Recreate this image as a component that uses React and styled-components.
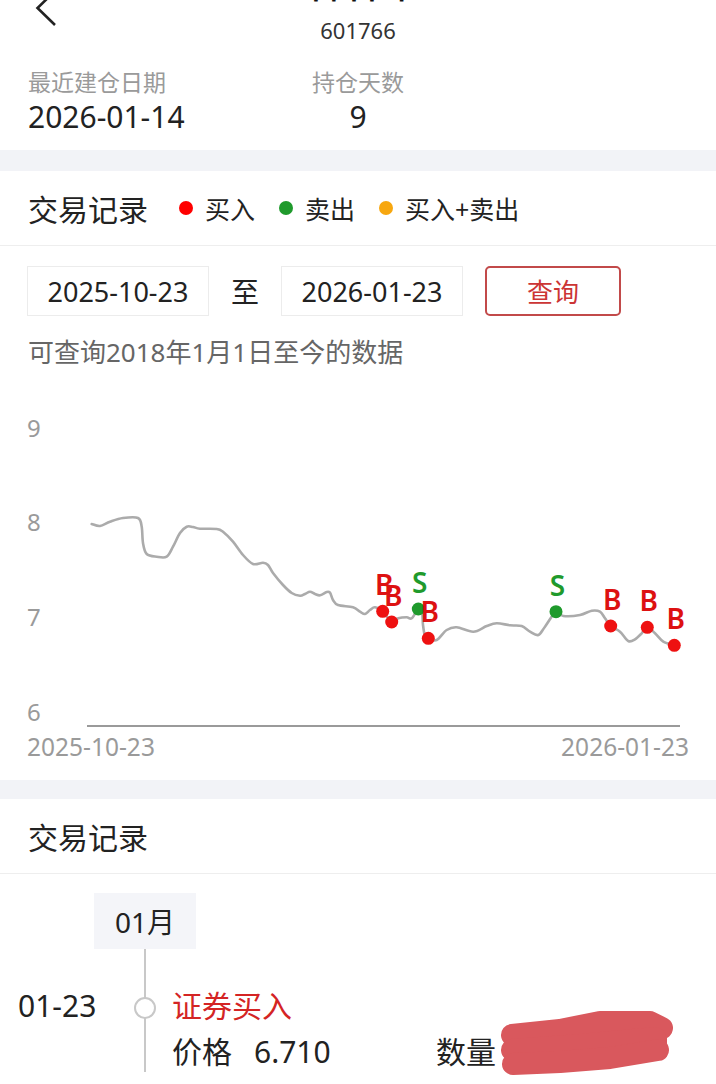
import React from "react";
import styled, { createGlobalStyle } from "styled-components";

const GlobalStyle = createGlobalStyle`
  html, body { margin: 0; padding: 0; background: #ffffff; }
  body {
    font-family: "Noto Sans", "Noto Sans CJK SC", sans-serif;
    color: #222;
    overflow: hidden;
  }
  * { box-sizing: border-box; }
`;

const Page = styled.div`
  width: 716px;
  background: #fff;
`;

const NavBar = styled.header`
  margin-top: -32px;
  display: grid;
  grid-template-columns: 72px 1fr 72px;
`;

const BackButton = styled.div`
  padding: 15px 0 0 30px;
  svg { display: block; }
`;

const NavCenter = styled.div`
  text-align: center;
`;

const StockName = styled.div`
  font-size: 28px;
  line-height: 40px;
  font-weight: 700;
  color: #111;
`;

const StockCode = styled.div`
  margin-top: 2px;
  font-size: 22px;
  line-height: 40px;
  color: #333;
`;

const InfoGrid = styled.section`
  display: grid;
  grid-template-columns: 284px auto;
  justify-content: start;
  padding: 16px 0 14px 28px;
`;

const InfoCol = styled.div`
  display: flex;
  flex-direction: column;
  align-items: ${(p) => (p.$center ? "center" : "flex-start")};
`;

const InfoLabel = styled.div`
  font-size: 23px;
  line-height: 32px;
  color: #9a9a9a;
`;

const InfoValue = styled.div`
  font-size: 30px;
  line-height: 38px;
  color: #222;
`;

const Band = styled.div`
  height: ${(p) => p.$h}px;
  background: #f2f3f7;
`;

const SectionHeader = styled.div`
  height: 75px;
  display: flex;
  align-items: center;
  padding-left: 28px;
  border-bottom: 1px solid #eeeeee;
`;

const SectionTitle = styled.h2`
  margin: 0;
  font-size: 30px;
  font-weight: 400;
  color: #222;
`;

const Legend = styled.div`
  display: flex;
  align-items: center;
  gap: 24px;
  margin-left: 31px;
`;

const LegendItem = styled.div`
  display: flex;
  align-items: center;
  gap: 12px;
  font-size: 25px;
  color: #222;
`;

const Dot = styled.span`
  width: 14px;
  height: 14px;
  border-radius: 50%;
  background: ${(p) => p.$color};
`;

const DateRow = styled.div`
  display: flex;
  align-items: center;
  gap: 22px;
  padding: 20px 0 0 27px;
`;

const DateBox = styled.div`
  width: 182px;
  height: 50px;
  border: 1.5px solid #ececec;
  display: flex;
  align-items: center;
  justify-content: center;
  font-size: 27px;
  color: #222;
`;

const RangeSep = styled.span`
  font-size: 28px;
  color: #222;
`;

const QueryButton = styled.button`
  width: 136px;
  height: 50px;
  border: 2px solid #c24a4a;
  border-radius: 5px;
  background: #fff;
  color: #cc3535;
  font-family: inherit;
  font-size: 26px;
  padding: 0;
`;

const Hint = styled.p`
  margin: 18px 0 0 28px;
  font-size: 26px;
  line-height: 36px;
  color: #666;
`;

const ChartSvg = styled.svg`
  display: block;
  width: 716px;
  height: 410px;
`;

const MonthRow = styled.div`
  padding: 19px 0 0 94px;
`;

const MonthTag = styled.div`
  width: 102px;
  height: 56px;
  background: #f4f5f9;
  display: flex;
  align-items: center;
  justify-content: center;
  font-size: 28px;
  color: #222;
`;

const ItemRow = styled.div`
  display: grid;
  grid-template-columns: 124px 42px 1fr;
  padding-bottom: 40px;
`;

const DateCell = styled.div`
  padding: 37px 0 0 18px;
  font-size: 30px;
  line-height: 40px;
  color: #222;
`;

const Rail = styled.div`
  display: flex;
  justify-content: center;
  background: linear-gradient(#c8c8c8, #c8c8c8) no-repeat center / 2px 100%;
`;

const RailNode = styled.span`
  margin-top: 48px;
  width: 22px;
  height: 22px;
  border-radius: 50%;
  border: 2px solid #c8c8c8;
  background: #fff;
`;

const Content = styled.div`
  padding: 37px 0 0 6px;
`;

const TradeType = styled.div`
  font-size: 30px;
  line-height: 40px;
  color: ${(p) => p.$color};
`;

const DetailGrid = styled.div`
  margin-top: 6px;
  display: grid;
  grid-template-columns: 264px 1fr;
`;

const DetailCell = styled.div`
  position: relative;
  display: flex;
  gap: 22px;
  font-size: 30px;
  line-height: 40px;
  color: #222;
`;

const Redaction = styled.svg`
  position: absolute;
  left: 60px;
  top: -24px;
  width: 184px;
  height: 72px;
`;

const points = [
  [91.7, 524], [100, 526], [110, 521.7], [123, 518], [138, 518], [141.7, 526.7], [143, 543],
  [146.7, 554], [156.7, 556.7], [166.7, 556.7], [173, 546.7], [180, 533], [186.7, 526.7],
  [193, 527], [200, 528.7], [216.7, 529], [223, 531.7], [233, 541.7], [243, 555], [253, 564],
  [263, 562.7], [268, 565], [273, 573], [283, 585], [291.7, 593], [300, 595.7], [305, 594],
  [310, 591.7], [315, 594], [320, 595.3], [326.7, 592], [330, 592.7], [333, 600], [338, 605],
  [353, 607.3], [360, 611.7], [365, 614], [370, 610], [375, 607.3], [382.7, 611.3],
  [391.7, 622], [398.3, 618.3], [406.7, 617.3], [411.7, 618.3], [418.3, 609], [422, 612],
  [423, 625], [425, 636], [428.3, 638.3], [436.7, 640], [446.7, 630], [456.7, 627.3],
  [473.3, 631.7], [486.7, 626], [496.7, 623.3], [510, 625.3], [521.7, 626], [530, 631.7],
  [538.3, 635], [545, 626.7], [556, 611.7], [563.3, 616], [580, 615], [591.7, 610.7],
  [600, 611.7], [605, 618.3], [610.7, 626], [620, 631.7], [628.3, 641], [635, 639.3],
  [641.7, 633.3], [647.3, 627.3], [655, 633.3], [663.3, 641.7], [674.3, 645.3],
];

function smoothPath(pts) {
  let d = `M${pts[0][0]},${pts[0][1]}`;
  for (let i = 0; i < pts.length - 1; i++) {
    const p0 = pts[i - 1] || pts[i];
    const p1 = pts[i];
    const p2 = pts[i + 1];
    const p3 = pts[i + 2] || p2;
    const c1x = p1[0] + (p2[0] - p0[0]) / 6;
    const c1y = p1[1] + (p2[1] - p0[1]) / 6;
    const c2x = p2[0] - (p3[0] - p1[0]) / 6;
    const c2y = p2[1] - (p3[1] - p1[1]) / 6;
    d += ` C${c1x.toFixed(1)},${c1y.toFixed(1)} ${c2x.toFixed(1)},${c2y.toFixed(1)} ${p2[0]},${p2[1]}`;
  }
  return d;
}

const RED = "#ee1111";
const GREEN = "#1f9a2c";

const trades = [
  { x: 382.7, y: 611.3, t: "B" },
  { x: 391.7, y: 622, t: "B" },
  { x: 418.3, y: 609, t: "S" },
  { x: 428.3, y: 638.3, t: "B" },
  { x: 556, y: 611.7, t: "S" },
  { x: 610.7, y: 626, t: "B" },
  { x: 647.3, y: 627.3, t: "B" },
  { x: 674.3, y: 645.3, t: "B" },
];

const yTicks = [
  { v: "9", y: 428 },
  { v: "8", y: 522 },
  { v: "7", y: 617 },
  { v: "6", y: 712 },
];

function PriceChart() {
  const font = '"Noto Sans", sans-serif';
  return (
    <ChartSvg viewBox="0 370 716 410">
      {yTicks.map((t) => (
        <text key={t.v} x="27" y={t.y + 8.5} fontSize="24" fill="#9a9a9a" fontFamily={font}>
          {t.v}
        </text>
      ))}
      <line x1="87" y1="726" x2="680" y2="726" stroke="#9a9a9a" strokeWidth="2" />
      <text x="27" y="756" fontSize="24.5" fill="#9a9a9a" fontFamily={font}>
        2025-10-23
      </text>
      <text x="689" y="756" fontSize="24.5" fill="#9a9a9a" fontFamily={font} textAnchor="end">
        2026-01-23
      </text>
      <path d={smoothPath(points)} fill="none" stroke="#ababab" strokeWidth="2.6" strokeLinejoin="round" strokeLinecap="round" />
      {trades.map((tr, i) => (
        <circle key={`c${i}`} cx={tr.x} cy={tr.y} r="6.5" fill={tr.t === "B" ? RED : GREEN} />
      ))}
      {trades.map((tr, i) => (
        <text
          key={`t${i}`}
          x={tr.x + 1.5}
          y={tr.y - 16}
          fontSize="28"
          fontWeight="600"
          fill={tr.t === "B" ? "#dd1111" : GREEN}
          fontFamily={font}
          textAnchor="middle"
        >
          {tr.t}
        </text>
      ))}
    </ChartSvg>
  );
}

export default function App() {
  return (
    <Page>
      <GlobalStyle />
      <NavBar>
        <BackButton>
          <svg width="30" height="48" viewBox="0 0 30 48">
            <path d="M25 8 L7.5 25 L25 42" fill="none" stroke="#222" strokeWidth="2.6" strokeLinejoin="miter" />
          </svg>
        </BackButton>
        <NavCenter>
          <StockName>中国中车</StockName>
          <StockCode>601766</StockCode>
        </NavCenter>
        <div />
      </NavBar>

      <InfoGrid>
        <InfoCol>
          <InfoLabel>最近建仓日期</InfoLabel>
          <InfoValue>2026-01-14</InfoValue>
        </InfoCol>
        <InfoCol $center>
          <InfoLabel>持仓天数</InfoLabel>
          <InfoValue>9</InfoValue>
        </InfoCol>
      </InfoGrid>

      <Band $h={21} />

      <SectionHeader>
        <SectionTitle>交易记录</SectionTitle>
        <Legend>
          <LegendItem>
            <Dot $color="#ff0000" />
            买入
          </LegendItem>
          <LegendItem>
            <Dot $color="#1f9a2c" />
            卖出
          </LegendItem>
          <LegendItem>
            <Dot $color="#f7a70f" />
            买入+卖出
          </LegendItem>
        </Legend>
      </SectionHeader>

      <DateRow>
        <DateBox>2025-10-23</DateBox>
        <RangeSep>至</RangeSep>
        <DateBox>2026-01-23</DateBox>
        <QueryButton>查询</QueryButton>
      </DateRow>

      <Hint>可查询2018年1月1日至今的数据</Hint>

      <PriceChart />

      <Band $h={19} />

      <SectionHeader>
        <SectionTitle>交易记录</SectionTitle>
      </SectionHeader>

      <MonthRow>
        <MonthTag>01月</MonthTag>
      </MonthRow>

      <ItemRow>
        <DateCell>01-23</DateCell>
        <Rail>
          <RailNode />
        </Rail>
        <Content>
          <TradeType $color="#d42424">证券买入</TradeType>
          <DetailGrid>
            <DetailCell>
              <span>价格</span>
              <span>6.710</span>
            </DetailCell>
            <DetailCell>
              <span>数量</span>
              <Redaction viewBox="0 0 184 72">
                <g fill="#d9585d" stroke="#d9585d" strokeLinecap="round" strokeLinejoin="round">
                  <polygon points="12,22 169,17 169,47 12,60" strokeWidth="4" />
                  <polyline points="16,27 64,22 104,14 154,14 166,20" fill="none" strokeWidth="22" />
                  <polyline points="16,42 84,37 159,30" fill="none" strokeWidth="22" />
                  <polyline points="17,56 64,54 114,50 162,42" fill="none" strokeWidth="22" />
                </g>
              </Redaction>
            </DetailCell>
          </DetailGrid>
        </Content>
      </ItemRow>
    </Page>
  );
}
